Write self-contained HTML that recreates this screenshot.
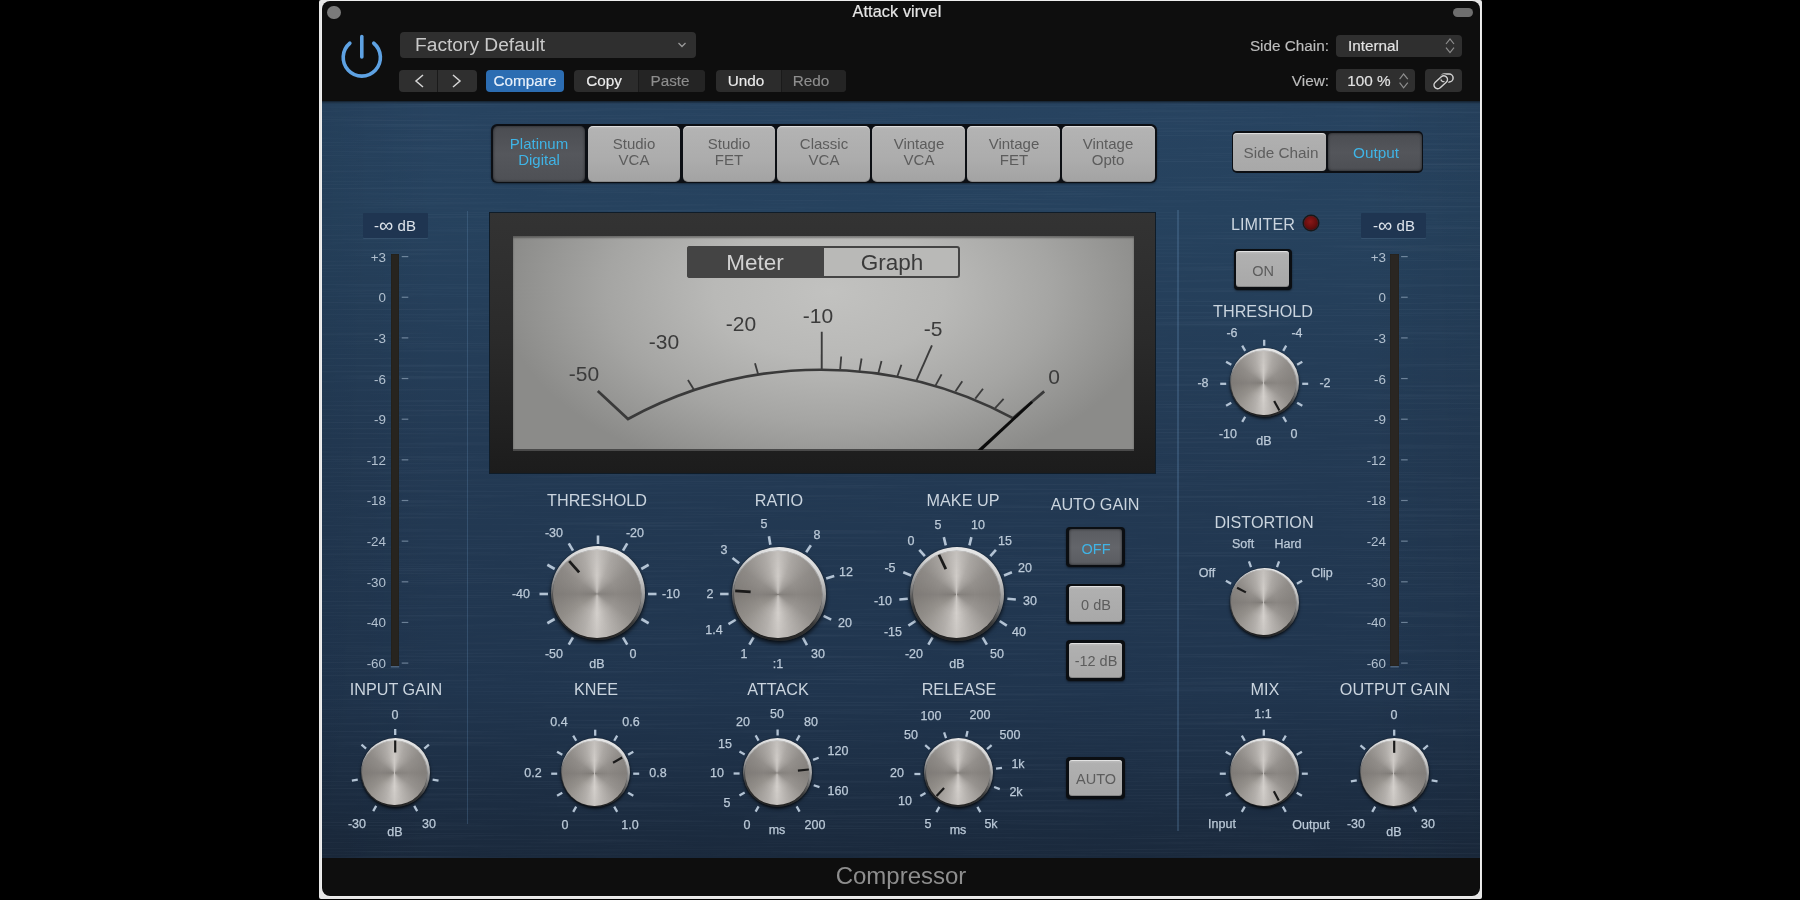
<!DOCTYPE html><html><head><meta charset="utf-8"><style>
html,body{margin:0;padding:0;background:#000;width:1800px;height:900px;overflow:hidden;}
body{position:relative;font-family:"Liberation Sans", sans-serif;}
.t{position:absolute;white-space:nowrap;font-family:"Liberation Sans", sans-serif;will-change:transform;}
.knob{position:absolute;border-radius:50%;}
</style></head><body>

<div style="position:absolute;left:319.2px;top:0px;width:1163.3px;height:898.7px;background:#e6e6e6;border-radius:2px;"></div>
<div style="position:absolute;left:321.5px;top:1.1px;width:1158.6px;height:895.3px;background:#0e0e0e;border-radius:8px;box-shadow:0 0 0 0.8px #f0f0f0;"></div>
<div style="position:absolute;left:321.5px;top:101px;width:1158.5px;height:757px;background:linear-gradient(180deg,rgb(39,67,96) 0%,rgb(38,66,94) 15%,rgb(35,58,84) 45%,rgb(32,53,78) 78%,rgb(28,45,66) 93%,rgb(26,41,60) 100%);"></div>
<div style="position:absolute;left:321.5px;top:101px;width:1158.5px;height:757px;background:linear-gradient(90deg,rgba(0,0,0,0.06) 0%,rgba(0,0,0,0) 10%,rgba(0,0,0,0) 90%,rgba(0,0,0,0.06) 100%);"></div>
<svg style="position:absolute;left:321.5px;top:101px" width="1158.5" height="757"><filter id="brush" x="0" y="0" width="100%" height="100%"><feTurbulence type="fractalNoise" baseFrequency="0.005 0.7" numOctaves="2" seed="3"/><feColorMatrix type="matrix" values="0 0 0 0 0.55  0 0 0 0 0.65  0 0 0 0 0.8  0 0 0 2 -1.0"/></filter><filter id="brush2" x="0" y="0" width="100%" height="100%"><feTurbulence type="fractalNoise" baseFrequency="0.005 0.7" numOctaves="2" seed="11"/><feColorMatrix type="matrix" values="0 0 0 0 0.05  0 0 0 0 0.08  0 0 0 0 0.12  0 0 0 2 -1.0"/></filter><rect width="1158.5" height="757" filter="url(#brush)" opacity="0.07"/><rect width="1158.5" height="757" filter="url(#brush2)" opacity="0.12"/></svg>
<div style="position:absolute;left:321.5px;top:101px;width:1158.5px;height:3px;background:linear-gradient(180deg,rgba(0,0,0,0.5),rgba(0,0,0,0));"></div>
<div style="position:absolute;left:327px;top:5.5px;width:13.6px;height:13.6px;border-radius:50%;background:#7a7a7a;"></div>
<div style="position:absolute;left:1453.3px;top:8px;width:19.7px;height:9px;border-radius:4.5px;background:#6e6e6e;"></div>
<div class="t" style="left:696.60px;top:1.27px;width:400px;text-align:center;line-height:21.06px;font-size:16.2px;color:#e6e6e6;font-weight:400;letter-spacing:0.12px;-webkit-text-stroke:0.2px #e6e6e6;">Attack virvel</div>
<div style="position:absolute;left:399.50px;top:31.50px;width:296.30px;height:26.00px;background:#2f2f2f;border-radius:4px;"></div>
<div class="t" style="left:415.00px;top:32.82px;width:400px;text-align:left;line-height:24.96px;font-size:19.2px;color:#c9c9c9;font-weight:400;letter-spacing:0px;">Factory Default</div>
<div style="position:absolute;left:399.00px;top:70.00px;width:77.50px;height:22.00px;background:#2f2f2f;border-radius:4px;"></div>
<div style="position:absolute;left:437.00px;top:70.00px;width:1.00px;height:22.00px;background:#1a1a1a;"></div>
<div style="position:absolute;left:486.00px;top:70.00px;width:78.00px;height:22.00px;background:#2c6db2;border-radius:4px;"></div>
<div class="t" style="left:325.00px;top:71.06px;width:400px;text-align:center;line-height:19.89px;font-size:15.3px;color:#e9f1fb;font-weight:400;letter-spacing:0px;-webkit-text-stroke:0.15px #e9f1fb;">Compare</div>
<div style="position:absolute;left:574.00px;top:70.00px;width:131.00px;height:22.00px;background:#2c2c2c;border-radius:4px;"></div>
<div style="position:absolute;left:638.00px;top:70.00px;width:67.00px;height:22.00px;background:#242424;border-radius:0 4px 4px 0;"></div>
<div style="position:absolute;left:638.00px;top:70.00px;width:1.00px;height:22.00px;background:#1a1a1a;"></div>
<div class="t" style="left:404.00px;top:71.06px;width:400px;text-align:center;line-height:19.89px;font-size:15.3px;color:#ececec;font-weight:400;letter-spacing:0px;-webkit-text-stroke:0.15px #ececec;">Copy</div>
<div class="t" style="left:470.00px;top:71.06px;width:400px;text-align:center;line-height:19.89px;font-size:15.3px;color:#8e8e8e;font-weight:400;letter-spacing:0px;-webkit-text-stroke:0.15px #8e8e8e;">Paste</div>
<div style="position:absolute;left:715.50px;top:70.00px;width:130.30px;height:22.00px;background:#2c2c2c;border-radius:4px;"></div>
<div style="position:absolute;left:781.00px;top:70.00px;width:64.80px;height:22.00px;background:#242424;border-radius:0 4px 4px 0;"></div>
<div style="position:absolute;left:781.00px;top:70.00px;width:1.00px;height:22.00px;background:#1a1a1a;"></div>
<div class="t" style="left:546.00px;top:71.06px;width:400px;text-align:center;line-height:19.89px;font-size:15.3px;color:#ececec;font-weight:400;letter-spacing:0px;-webkit-text-stroke:0.15px #ececec;">Undo</div>
<div class="t" style="left:611.00px;top:71.06px;width:400px;text-align:center;line-height:19.89px;font-size:15.3px;color:#8e8e8e;font-weight:400;letter-spacing:0px;-webkit-text-stroke:0.15px #8e8e8e;">Redo</div>
<div class="t" style="left:929.00px;top:35.85px;width:400px;text-align:right;line-height:19.89px;font-size:15.3px;color:#bdbdbd;font-weight:400;letter-spacing:0px;-webkit-text-stroke:0.15px #bdbdbd;">Side Chain:</div>
<div style="position:absolute;left:1335.70px;top:34.60px;width:126.00px;height:22.20px;background:#2f2f2f;border-radius:4px;"></div>
<div class="t" style="left:1348.00px;top:35.85px;width:400px;text-align:left;line-height:19.89px;font-size:15.3px;color:#e3e3e3;font-weight:400;letter-spacing:0px;-webkit-text-stroke:0.15px #e3e3e3;">Internal</div>
<div class="t" style="left:929.00px;top:70.66px;width:400px;text-align:right;line-height:19.89px;font-size:15.3px;color:#bdbdbd;font-weight:400;letter-spacing:0px;-webkit-text-stroke:0.15px #bdbdbd;">View:</div>
<div style="position:absolute;left:1335.70px;top:69.40px;width:79.10px;height:22.40px;background:#2f2f2f;border-radius:4px;"></div>
<div class="t" style="left:1169.00px;top:70.66px;width:400px;text-align:center;line-height:19.89px;font-size:15.3px;color:#e3e3e3;font-weight:400;letter-spacing:0px;-webkit-text-stroke:0.15px #e3e3e3;">100 %</div>
<div style="position:absolute;left:1425.00px;top:69.40px;width:36.70px;height:22.40px;background:#2f2f2f;border-radius:4px;"></div>
<svg style="position:absolute;left:0;top:0" width="1800" height="900"><path d="M 349.84 43.25 A 18.6 18.6 0 1 0 373.76 43.25" fill="none" stroke="#5ea2e3" stroke-width="3.6" stroke-linecap="round"/><line x1="361.8" y1="36.5" x2="361.8" y2="57" stroke="#5ea2e3" stroke-width="3.6" stroke-linecap="round"/><path d="M 678.5 43 L 682 46.5 L 685.5 43" fill="none" stroke="#9a9a9a" stroke-width="1.3"/><path d="M 423 75 L 416 81 L 423 87" fill="none" stroke="#d6d6d6" stroke-width="1.5"/><path d="M 453 75 L 460 81 L 453 87" fill="none" stroke="#d6d6d6" stroke-width="1.5"/><path d="M 1446 44 L 1450 39 L 1454 44 M 1446 47.6 L 1450 52.6 L 1454 47.6" fill="none" stroke="#8e8e8e" stroke-width="1.2"/><path d="M 1399.6 79.1 L 1403.6 74 L 1407.8 79.1 M 1399.6 82.7 L 1403.6 87.8 L 1407.8 82.7" fill="none" stroke="#8e8e8e" stroke-width="1.2"/><g fill="none" stroke="#d2d2d2" stroke-width="1.5"><rect x="1440.5" y="74" width="12.6" height="8" rx="4"/><rect x="1433" y="78.6" width="15.5" height="7.4" rx="3.7" transform="rotate(-42 1440.7 82.3)" stroke="#2c2c2c" stroke-width="3.2"/><rect x="1433" y="78.6" width="15.5" height="7.4" rx="3.7" transform="rotate(-42 1440.7 82.3)"/></g></svg>
<div class="t" style="left:700.60px;top:860.10px;width:400px;text-align:center;line-height:31.2px;font-size:24px;color:#8e8e8e;font-weight:400;letter-spacing:0px;">Compressor</div>
<div style="position:absolute;left:490.70px;top:123.70px;width:666.70px;height:59.60px;background:#0c0f14;border-radius:6px;box-shadow:0 1px 2px rgba(0,0,0,0.4);"></div>
<div style="position:absolute;left:492.60px;top:125.70px;width:92.30px;height:56.30px;background:linear-gradient(180deg,#4b4d52,#55575c 50%,#4e5055);border-radius:5px;box-shadow:inset 0 0 3px rgba(0,0,0,0.6);"></div>
<div class="t" style="left:338.75px;top:134.45px;width:400px;text-align:center;line-height:19.5px;font-size:15px;color:#3fb4e6;font-weight:400;letter-spacing:0px;">Platinum</div>
<div class="t" style="left:338.75px;top:150.05px;width:400px;text-align:center;line-height:19.5px;font-size:15px;color:#3fb4e6;font-weight:400;letter-spacing:0px;">Digital</div>
<div style="position:absolute;left:587.55px;top:125.70px;width:92.30px;height:56.00px;background:linear-gradient(180deg,#bdbdbd 0%,#b3b3b3 6%,#acacac 60%,#a3a3a3 100%);border-radius:5px;box-shadow:inset 0 1px 0 rgba(255,255,255,0.5),inset 0 -1px 0 rgba(0,0,0,0.15);"></div>
<div class="t" style="left:433.70px;top:134.45px;width:400px;text-align:center;line-height:19.5px;font-size:15px;color:#5c5c5c;font-weight:400;letter-spacing:0px;">Studio</div>
<div class="t" style="left:433.70px;top:150.05px;width:400px;text-align:center;line-height:19.5px;font-size:15px;color:#5c5c5c;font-weight:400;letter-spacing:0px;">VCA</div>
<div style="position:absolute;left:682.50px;top:125.70px;width:92.30px;height:56.00px;background:linear-gradient(180deg,#bdbdbd 0%,#b3b3b3 6%,#acacac 60%,#a3a3a3 100%);border-radius:5px;box-shadow:inset 0 1px 0 rgba(255,255,255,0.5),inset 0 -1px 0 rgba(0,0,0,0.15);"></div>
<div class="t" style="left:528.65px;top:134.45px;width:400px;text-align:center;line-height:19.5px;font-size:15px;color:#5c5c5c;font-weight:400;letter-spacing:0px;">Studio</div>
<div class="t" style="left:528.65px;top:150.05px;width:400px;text-align:center;line-height:19.5px;font-size:15px;color:#5c5c5c;font-weight:400;letter-spacing:0px;">FET</div>
<div style="position:absolute;left:777.45px;top:125.70px;width:92.30px;height:56.00px;background:linear-gradient(180deg,#bdbdbd 0%,#b3b3b3 6%,#acacac 60%,#a3a3a3 100%);border-radius:5px;box-shadow:inset 0 1px 0 rgba(255,255,255,0.5),inset 0 -1px 0 rgba(0,0,0,0.15);"></div>
<div class="t" style="left:623.60px;top:134.45px;width:400px;text-align:center;line-height:19.5px;font-size:15px;color:#5c5c5c;font-weight:400;letter-spacing:0px;">Classic</div>
<div class="t" style="left:623.60px;top:150.05px;width:400px;text-align:center;line-height:19.5px;font-size:15px;color:#5c5c5c;font-weight:400;letter-spacing:0px;">VCA</div>
<div style="position:absolute;left:872.40px;top:125.70px;width:92.30px;height:56.00px;background:linear-gradient(180deg,#bdbdbd 0%,#b3b3b3 6%,#acacac 60%,#a3a3a3 100%);border-radius:5px;box-shadow:inset 0 1px 0 rgba(255,255,255,0.5),inset 0 -1px 0 rgba(0,0,0,0.15);"></div>
<div class="t" style="left:718.55px;top:134.45px;width:400px;text-align:center;line-height:19.5px;font-size:15px;color:#5c5c5c;font-weight:400;letter-spacing:0px;">Vintage</div>
<div class="t" style="left:718.55px;top:150.05px;width:400px;text-align:center;line-height:19.5px;font-size:15px;color:#5c5c5c;font-weight:400;letter-spacing:0px;">VCA</div>
<div style="position:absolute;left:967.35px;top:125.70px;width:92.30px;height:56.00px;background:linear-gradient(180deg,#bdbdbd 0%,#b3b3b3 6%,#acacac 60%,#a3a3a3 100%);border-radius:5px;box-shadow:inset 0 1px 0 rgba(255,255,255,0.5),inset 0 -1px 0 rgba(0,0,0,0.15);"></div>
<div class="t" style="left:813.50px;top:134.45px;width:400px;text-align:center;line-height:19.5px;font-size:15px;color:#5c5c5c;font-weight:400;letter-spacing:0px;">Vintage</div>
<div class="t" style="left:813.50px;top:150.05px;width:400px;text-align:center;line-height:19.5px;font-size:15px;color:#5c5c5c;font-weight:400;letter-spacing:0px;">FET</div>
<div style="position:absolute;left:1062.30px;top:125.70px;width:92.30px;height:56.00px;background:linear-gradient(180deg,#bdbdbd 0%,#b3b3b3 6%,#acacac 60%,#a3a3a3 100%);border-radius:5px;box-shadow:inset 0 1px 0 rgba(255,255,255,0.5),inset 0 -1px 0 rgba(0,0,0,0.15);"></div>
<div class="t" style="left:908.45px;top:134.45px;width:400px;text-align:center;line-height:19.5px;font-size:15px;color:#5c5c5c;font-weight:400;letter-spacing:0px;">Vintage</div>
<div class="t" style="left:908.45px;top:150.05px;width:400px;text-align:center;line-height:19.5px;font-size:15px;color:#5c5c5c;font-weight:400;letter-spacing:0px;">Opto</div>
<div style="position:absolute;left:1231.90px;top:131.30px;width:191.30px;height:41.30px;background:#0c0f14;border-radius:5px;"></div>
<div style="position:absolute;left:1233.40px;top:132.90px;width:92.90px;height:37.80px;background:linear-gradient(180deg,#bdbdbd 0%,#b0b0b0 8%,#a8a8a8 100%);border-radius:4px;box-shadow:inset 0 1px 0 rgba(255,255,255,0.5);"></div>
<div style="position:absolute;left:1327.90px;top:132.90px;width:93.80px;height:37.80px;background:linear-gradient(180deg,#4b4d52,#54565b 50%,#4d4f54);border-radius:4px;box-shadow:inset 0 0 3px rgba(0,0,0,0.6);"></div>
<div class="t" style="left:1080.90px;top:143.16px;width:400px;text-align:center;line-height:19.89px;font-size:15.3px;color:#5e5e5e;font-weight:400;letter-spacing:0px;">Side Chain</div>
<div class="t" style="left:1175.80px;top:143.16px;width:400px;text-align:center;line-height:19.89px;font-size:15.3px;color:#3fb4e6;font-weight:400;letter-spacing:0px;">Output</div>
<div style="position:absolute;left:489.30px;top:212.30px;width:666.70px;height:261.40px;background:linear-gradient(180deg,#333333 0%,#2a2a2a 50%,#1c1c1c 100%);border:1px solid #0f1c28;box-sizing:border-box;"></div>
<div style="position:absolute;left:512.70px;top:235.80px;width:621.00px;height:214.70px;background:radial-gradient(ellipse 53% 90% at 51% 26%,#c2c2c0 0%,#b9b9b7 35%,#a5a5a3 68%,#8b8b89 100%);box-shadow:inset 0 2px 2px rgba(0,0,0,0.35);"></div>
<div style="position:absolute;left:512.70px;top:448.50px;width:621.00px;height:2.00px;background:#4a4a4a;"></div>
<div style="position:absolute;left:687.00px;top:246.40px;width:273.30px;height:31.40px;background:#b9b9b7;border:2px solid #444;border-radius:3px;box-sizing:border-box;"></div>
<div style="position:absolute;left:687.00px;top:246.40px;width:137.20px;height:31.40px;background:#444444;border-radius:3px 0 0 3px;"></div>
<div class="t" style="left:554.80px;top:247.68px;width:400px;text-align:center;line-height:29.25px;font-size:22.5px;color:#d2d2d2;font-weight:400;letter-spacing:0px;">Meter</div>
<div class="t" style="left:692.00px;top:247.68px;width:400px;text-align:center;line-height:29.25px;font-size:22.5px;color:#3a3a3a;font-weight:400;letter-spacing:0px;">Graph</div>
<svg style="position:absolute;left:0;top:0" width="1800" height="900"><path d="M 597.8 391.1 L 628.01 419.00 A 403.65 403.65 0 0 1 1012.91 418.16 L 1044.2 391.4" fill="none" stroke="#3a3a3a" stroke-width="2.7" stroke-linejoin="miter"/><line x1="694.29" y1="390.23" x2="687.95" y2="380.04" stroke="#3c3c3c" stroke-width="1.8"/><line x1="758.29" y1="374.69" x2="754.98" y2="363.15" stroke="#3c3c3c" stroke-width="1.8"/><line x1="821.72" y1="369.75" x2="821.76" y2="331.75" stroke="#3c3c3c" stroke-width="1.9"/><line x1="916.15" y1="381.07" x2="931.92" y2="345.40" stroke="#3c3c3c" stroke-width="1.9"/><line x1="840.20" y1="369.00" x2="841.23" y2="356.54" stroke="#3c3c3c" stroke-width="1.8"/><line x1="859.50" y1="370.80" x2="861.59" y2="358.48" stroke="#3c3c3c" stroke-width="1.8"/><line x1="878.40" y1="373.10" x2="881.50" y2="360.99" stroke="#3c3c3c" stroke-width="1.8"/><line x1="897.30" y1="376.50" x2="901.40" y2="364.69" stroke="#3c3c3c" stroke-width="1.8"/><line x1="935.60" y1="385.40" x2="941.58" y2="374.42" stroke="#3c3c3c" stroke-width="1.8"/><line x1="955.40" y1="391.60" x2="962.27" y2="381.16" stroke="#3c3c3c" stroke-width="1.8"/><line x1="975.30" y1="398.60" x2="983.01" y2="388.76" stroke="#3c3c3c" stroke-width="1.8"/><line x1="995.10" y1="408.10" x2="1003.61" y2="398.94" stroke="#3c3c3c" stroke-width="1.8"/><path d="M 977.5 450 L 982.5 450 L 1033 402.8 L 1031.2 401 Z" fill="#0c0c0c"/></svg>
<div class="t" style="left:384.10px;top:360.35px;width:400px;text-align:center;line-height:27.3px;font-size:21px;color:#3b3b3b;font-weight:400;letter-spacing:0px;">-50</div>
<div class="t" style="left:464.30px;top:327.55px;width:400px;text-align:center;line-height:27.3px;font-size:21px;color:#3b3b3b;font-weight:400;letter-spacing:0px;">-30</div>
<div class="t" style="left:541.30px;top:310.35px;width:400px;text-align:center;line-height:27.3px;font-size:21px;color:#3b3b3b;font-weight:400;letter-spacing:0px;">-20</div>
<div class="t" style="left:617.50px;top:302.35px;width:400px;text-align:center;line-height:27.3px;font-size:21px;color:#3b3b3b;font-weight:400;letter-spacing:0px;">-10</div>
<div class="t" style="left:732.50px;top:314.55px;width:400px;text-align:center;line-height:27.3px;font-size:21px;color:#3b3b3b;font-weight:400;letter-spacing:0px;">-5</div>
<div class="t" style="left:853.70px;top:362.95px;width:400px;text-align:center;line-height:27.3px;font-size:21px;color:#3b3b3b;font-weight:400;letter-spacing:0px;">0</div>
<div style="position:absolute;left:466.50px;top:210.60px;width:1.50px;height:613.80px;background:rgba(95,135,175,0.30);"></div>
<div style="position:absolute;left:1177.00px;top:210.00px;width:1.50px;height:621.00px;background:rgba(95,135,175,0.30);"></div>
<div style="position:absolute;left:362.80px;top:212.50px;width:65.00px;height:25.50px;background:#1f3551;border-radius:1px;box-shadow:0 1px 0 rgba(120,150,180,0.18);"></div>
<div class="t" style="left:195.30px;top:215.85px;width:400px;text-align:center;line-height:19.5px;font-size:15px;color:#dde3ea;font-weight:400;letter-spacing:0px;">-<span style="font-size:20px;line-height:10px;vertical-align:-1px">&#8734;</span> dB</div>
<div style="position:absolute;left:390.80px;top:254.00px;width:8.40px;height:411.60px;background:#27241f;box-shadow:inset 0 0 1px rgba(0,0,0,0.8);"></div>
<div class="t" style="left:-13.80px;top:248.59px;width:400px;text-align:right;line-height:17.42px;font-size:13.4px;color:#b2c0cf;font-weight:400;letter-spacing:0px;">+3</div>
<div class="t" style="left:-13.80px;top:289.24px;width:400px;text-align:right;line-height:17.42px;font-size:13.4px;color:#b2c0cf;font-weight:400;letter-spacing:0px;">0</div>
<div class="t" style="left:-13.80px;top:329.89px;width:400px;text-align:right;line-height:17.42px;font-size:13.4px;color:#b2c0cf;font-weight:400;letter-spacing:0px;">-3</div>
<div class="t" style="left:-13.80px;top:370.54px;width:400px;text-align:right;line-height:17.42px;font-size:13.4px;color:#b2c0cf;font-weight:400;letter-spacing:0px;">-6</div>
<div class="t" style="left:-13.80px;top:411.19px;width:400px;text-align:right;line-height:17.42px;font-size:13.4px;color:#b2c0cf;font-weight:400;letter-spacing:0px;">-9</div>
<div class="t" style="left:-13.80px;top:451.84px;width:400px;text-align:right;line-height:17.42px;font-size:13.4px;color:#b2c0cf;font-weight:400;letter-spacing:0px;">-12</div>
<div class="t" style="left:-13.80px;top:492.49px;width:400px;text-align:right;line-height:17.42px;font-size:13.4px;color:#b2c0cf;font-weight:400;letter-spacing:0px;">-18</div>
<div class="t" style="left:-13.80px;top:533.14px;width:400px;text-align:right;line-height:17.42px;font-size:13.4px;color:#b2c0cf;font-weight:400;letter-spacing:0px;">-24</div>
<div class="t" style="left:-13.80px;top:573.79px;width:400px;text-align:right;line-height:17.42px;font-size:13.4px;color:#b2c0cf;font-weight:400;letter-spacing:0px;">-30</div>
<div class="t" style="left:-13.80px;top:614.44px;width:400px;text-align:right;line-height:17.42px;font-size:13.4px;color:#b2c0cf;font-weight:400;letter-spacing:0px;">-40</div>
<div class="t" style="left:-13.80px;top:655.09px;width:400px;text-align:right;line-height:17.42px;font-size:13.4px;color:#b2c0cf;font-weight:400;letter-spacing:0px;">-60</div>
<div style="position:absolute;left:1361.30px;top:212.50px;width:65.20px;height:25.50px;background:#1f3551;border-radius:1px;box-shadow:0 1px 0 rgba(120,150,180,0.18);"></div>
<div class="t" style="left:1193.90px;top:215.85px;width:400px;text-align:center;line-height:19.5px;font-size:15px;color:#dde3ea;font-weight:400;letter-spacing:0px;">-<span style="font-size:20px;line-height:10px;vertical-align:-1px">&#8734;</span> dB</div>
<div style="position:absolute;left:1390.40px;top:254.00px;width:8.40px;height:411.60px;background:#2a2622;box-shadow:inset 0 0 1px rgba(0,0,0,0.8);"></div>
<div class="t" style="left:985.60px;top:248.59px;width:400px;text-align:right;line-height:17.42px;font-size:13.4px;color:#b2c0cf;font-weight:400;letter-spacing:0px;">+3</div>
<div class="t" style="left:985.60px;top:289.24px;width:400px;text-align:right;line-height:17.42px;font-size:13.4px;color:#b2c0cf;font-weight:400;letter-spacing:0px;">0</div>
<div class="t" style="left:985.60px;top:329.89px;width:400px;text-align:right;line-height:17.42px;font-size:13.4px;color:#b2c0cf;font-weight:400;letter-spacing:0px;">-3</div>
<div class="t" style="left:985.60px;top:370.54px;width:400px;text-align:right;line-height:17.42px;font-size:13.4px;color:#b2c0cf;font-weight:400;letter-spacing:0px;">-6</div>
<div class="t" style="left:985.60px;top:411.19px;width:400px;text-align:right;line-height:17.42px;font-size:13.4px;color:#b2c0cf;font-weight:400;letter-spacing:0px;">-9</div>
<div class="t" style="left:985.60px;top:451.84px;width:400px;text-align:right;line-height:17.42px;font-size:13.4px;color:#b2c0cf;font-weight:400;letter-spacing:0px;">-12</div>
<div class="t" style="left:985.60px;top:492.49px;width:400px;text-align:right;line-height:17.42px;font-size:13.4px;color:#b2c0cf;font-weight:400;letter-spacing:0px;">-18</div>
<div class="t" style="left:985.60px;top:533.14px;width:400px;text-align:right;line-height:17.42px;font-size:13.4px;color:#b2c0cf;font-weight:400;letter-spacing:0px;">-24</div>
<div class="t" style="left:985.60px;top:573.79px;width:400px;text-align:right;line-height:17.42px;font-size:13.4px;color:#b2c0cf;font-weight:400;letter-spacing:0px;">-30</div>
<div class="t" style="left:985.60px;top:614.44px;width:400px;text-align:right;line-height:17.42px;font-size:13.4px;color:#b2c0cf;font-weight:400;letter-spacing:0px;">-40</div>
<div class="t" style="left:985.60px;top:655.09px;width:400px;text-align:right;line-height:17.42px;font-size:13.4px;color:#b2c0cf;font-weight:400;letter-spacing:0px;">-60</div>
<svg style="position:absolute;left:0;top:0" width="1800" height="900"><line x1="401.70" y1="256.60" x2="408.30" y2="256.60" stroke="rgba(170,190,210,0.55)" stroke-width="1.2" stroke-linecap="butt"/><line x1="401.70" y1="297.25" x2="408.30" y2="297.25" stroke="rgba(170,190,210,0.55)" stroke-width="1.2" stroke-linecap="butt"/><line x1="401.70" y1="337.90" x2="408.30" y2="337.90" stroke="rgba(170,190,210,0.55)" stroke-width="1.2" stroke-linecap="butt"/><line x1="401.70" y1="378.55" x2="408.30" y2="378.55" stroke="rgba(170,190,210,0.55)" stroke-width="1.2" stroke-linecap="butt"/><line x1="401.70" y1="419.20" x2="408.30" y2="419.20" stroke="rgba(170,190,210,0.55)" stroke-width="1.2" stroke-linecap="butt"/><line x1="401.70" y1="459.85" x2="408.30" y2="459.85" stroke="rgba(170,190,210,0.55)" stroke-width="1.2" stroke-linecap="butt"/><line x1="401.70" y1="500.50" x2="408.30" y2="500.50" stroke="rgba(170,190,210,0.55)" stroke-width="1.2" stroke-linecap="butt"/><line x1="401.70" y1="541.15" x2="408.30" y2="541.15" stroke="rgba(170,190,210,0.55)" stroke-width="1.2" stroke-linecap="butt"/><line x1="401.70" y1="581.80" x2="408.30" y2="581.80" stroke="rgba(170,190,210,0.55)" stroke-width="1.2" stroke-linecap="butt"/><line x1="401.70" y1="622.45" x2="408.30" y2="622.45" stroke="rgba(170,190,210,0.55)" stroke-width="1.2" stroke-linecap="butt"/><line x1="401.70" y1="663.10" x2="408.30" y2="663.10" stroke="rgba(170,190,210,0.55)" stroke-width="1.2" stroke-linecap="butt"/><line x1="390.80" y1="666.80" x2="399.20" y2="666.80" stroke="rgba(150,175,200,0.45)" stroke-width="1.3" stroke-linecap="butt"/><line x1="1401.10" y1="256.60" x2="1407.70" y2="256.60" stroke="rgba(170,190,210,0.55)" stroke-width="1.2" stroke-linecap="butt"/><line x1="1401.10" y1="297.25" x2="1407.70" y2="297.25" stroke="rgba(170,190,210,0.55)" stroke-width="1.2" stroke-linecap="butt"/><line x1="1401.10" y1="337.90" x2="1407.70" y2="337.90" stroke="rgba(170,190,210,0.55)" stroke-width="1.2" stroke-linecap="butt"/><line x1="1401.10" y1="378.55" x2="1407.70" y2="378.55" stroke="rgba(170,190,210,0.55)" stroke-width="1.2" stroke-linecap="butt"/><line x1="1401.10" y1="419.20" x2="1407.70" y2="419.20" stroke="rgba(170,190,210,0.55)" stroke-width="1.2" stroke-linecap="butt"/><line x1="1401.10" y1="459.85" x2="1407.70" y2="459.85" stroke="rgba(170,190,210,0.55)" stroke-width="1.2" stroke-linecap="butt"/><line x1="1401.10" y1="500.50" x2="1407.70" y2="500.50" stroke="rgba(170,190,210,0.55)" stroke-width="1.2" stroke-linecap="butt"/><line x1="1401.10" y1="541.15" x2="1407.70" y2="541.15" stroke="rgba(170,190,210,0.55)" stroke-width="1.2" stroke-linecap="butt"/><line x1="1401.10" y1="581.80" x2="1407.70" y2="581.80" stroke="rgba(170,190,210,0.55)" stroke-width="1.2" stroke-linecap="butt"/><line x1="1401.10" y1="622.45" x2="1407.70" y2="622.45" stroke="rgba(170,190,210,0.55)" stroke-width="1.2" stroke-linecap="butt"/><line x1="1401.10" y1="663.10" x2="1407.70" y2="663.10" stroke="rgba(170,190,210,0.55)" stroke-width="1.2" stroke-linecap="butt"/><line x1="1390.40" y1="666.80" x2="1398.80" y2="666.80" stroke="rgba(150,175,200,0.45)" stroke-width="1.3" stroke-linecap="butt"/></svg>
<div class="t" style="left:396.60px;top:490.07px;width:400px;text-align:center;line-height:21.06px;font-size:16.2px;color:#cad4de;font-weight:400;letter-spacing:0px;">THRESHOLD</div>
<div class="t" style="left:579.10px;top:490.07px;width:400px;text-align:center;line-height:21.06px;font-size:16.2px;color:#cad4de;font-weight:400;letter-spacing:0px;">RATIO</div>
<div class="t" style="left:762.90px;top:490.07px;width:400px;text-align:center;line-height:21.06px;font-size:16.2px;color:#cad4de;font-weight:400;letter-spacing:0px;">MAKE UP</div>
<div class="t" style="left:895.20px;top:493.57px;width:400px;text-align:center;line-height:21.06px;font-size:16.2px;color:#cad4de;font-weight:400;letter-spacing:0px;">AUTO GAIN</div>
<div class="t" style="left:396.30px;top:678.87px;width:400px;text-align:center;line-height:21.06px;font-size:16.2px;color:#cad4de;font-weight:400;letter-spacing:0px;">KNEE</div>
<div class="t" style="left:578.00px;top:678.87px;width:400px;text-align:center;line-height:21.06px;font-size:16.2px;color:#cad4de;font-weight:400;letter-spacing:0px;">ATTACK</div>
<div class="t" style="left:759.00px;top:678.77px;width:400px;text-align:center;line-height:21.06px;font-size:16.2px;color:#cad4de;font-weight:400;letter-spacing:0px;">RELEASE</div>
<div class="t" style="left:195.60px;top:679.07px;width:400px;text-align:center;line-height:21.06px;font-size:16.2px;color:#cad4de;font-weight:400;letter-spacing:0px;">INPUT GAIN</div>
<div class="t" style="left:1064.60px;top:678.57px;width:400px;text-align:center;line-height:21.06px;font-size:16.2px;color:#cad4de;font-weight:400;letter-spacing:0px;">MIX</div>
<div class="t" style="left:1194.60px;top:678.57px;width:400px;text-align:center;line-height:21.06px;font-size:16.2px;color:#cad4de;font-weight:400;letter-spacing:0px;">OUTPUT GAIN</div>
<div class="t" style="left:1063.80px;top:512.27px;width:400px;text-align:center;line-height:21.06px;font-size:16.2px;color:#cad4de;font-weight:400;letter-spacing:0px;">DISTORTION</div>
<div class="t" style="left:1062.50px;top:301.07px;width:400px;text-align:center;line-height:21.06px;font-size:16.2px;color:#cad4de;font-weight:400;letter-spacing:0px;">THRESHOLD</div>
<div class="t" style="left:1063.10px;top:213.57px;width:400px;text-align:center;line-height:21.06px;font-size:16.2px;color:#cad4de;font-weight:400;letter-spacing:0px;">LIMITER</div>
<div style="position:absolute;left:1303.5px;top:216px;width:14.4px;height:14.4px;border-radius:50%;background:radial-gradient(circle at 45% 40%,#8a1818 0%,#640e0e 55%,#320707 100%);box-shadow:0 0 0 1.5px #181818;"></div>
<div style="position:absolute;left:1066.40px;top:526.60px;width:58.50px;height:40.70px;background:#0b0e12;border-radius:4px;box-shadow:0 1px 2px rgba(0,0,0,0.5);"></div>
<div style="position:absolute;left:1069.00px;top:529.30px;width:53.30px;height:35.30px;background:linear-gradient(180deg,#5a5c61,#63656a 50%,#5a5c61);border-radius:3px;box-shadow:inset 0 0 3px rgba(0,0,0,0.6);"></div>
<div class="t" style="left:895.65px;top:539.53px;width:400px;text-align:center;line-height:18.85px;font-size:14.5px;color:#3fb4e6;font-weight:400;letter-spacing:0px;">OFF</div>
<div style="position:absolute;left:1066.40px;top:583.60px;width:58.50px;height:40.70px;background:#0b0e12;border-radius:4px;box-shadow:0 1px 2px rgba(0,0,0,0.5);"></div>
<div style="position:absolute;left:1069.00px;top:586.30px;width:53.30px;height:35.30px;background:linear-gradient(180deg,#c0c0c0 0%,#b0b0b0 10%,#a8a8a8 100%);border-radius:3px;box-shadow:inset 0 1px 0 rgba(255,255,255,0.55),inset 0 -1px 0 rgba(0,0,0,0.2);"></div>
<div class="t" style="left:895.65px;top:595.83px;width:400px;text-align:center;line-height:18.85px;font-size:14.5px;color:#5c5c5c;font-weight:400;letter-spacing:0px;">0 dB</div>
<div style="position:absolute;left:1066.40px;top:640.10px;width:58.50px;height:40.70px;background:#0b0e12;border-radius:4px;box-shadow:0 1px 2px rgba(0,0,0,0.5);"></div>
<div style="position:absolute;left:1069.00px;top:642.80px;width:53.30px;height:35.30px;background:linear-gradient(180deg,#c0c0c0 0%,#b0b0b0 10%,#a8a8a8 100%);border-radius:3px;box-shadow:inset 0 1px 0 rgba(255,255,255,0.55),inset 0 -1px 0 rgba(0,0,0,0.2);"></div>
<div class="t" style="left:895.65px;top:652.33px;width:400px;text-align:center;line-height:18.85px;font-size:14.5px;color:#5c5c5c;font-weight:400;letter-spacing:0px;">-12 dB</div>
<div style="position:absolute;left:1066.40px;top:757.40px;width:58.50px;height:41.60px;background:#0b0e12;border-radius:4px;box-shadow:0 1px 2px rgba(0,0,0,0.5);"></div>
<div style="position:absolute;left:1069.00px;top:760.10px;width:53.30px;height:36.20px;background:linear-gradient(180deg,#c0c0c0 0%,#b0b0b0 10%,#a8a8a8 100%);border-radius:3px;box-shadow:inset 0 1px 0 rgba(255,255,255,0.55),inset 0 -1px 0 rgba(0,0,0,0.2);"></div>
<div class="t" style="left:895.65px;top:770.08px;width:400px;text-align:center;line-height:18.85px;font-size:14.5px;color:#5c5c5c;font-weight:400;letter-spacing:0px;">AUTO</div>
<div style="position:absolute;left:1233.60px;top:248.50px;width:58.30px;height:41.60px;background:#0b0e12;border-radius:4px;box-shadow:0 1px 2px rgba(0,0,0,0.5);"></div>
<div style="position:absolute;left:1236.20px;top:251.20px;width:53.10px;height:36.20px;background:linear-gradient(180deg,#c0c0c0 0%,#b0b0b0 10%,#a8a8a8 100%);border-radius:3px;box-shadow:inset 0 1px 0 rgba(255,255,255,0.55),inset 0 -1px 0 rgba(0,0,0,0.2);"></div>
<div class="t" style="left:1062.75px;top:261.68px;width:400px;text-align:center;line-height:18.85px;font-size:14.5px;color:#5c5c5c;font-weight:400;letter-spacing:0px;">ON</div>
<div class="t" style="left:353.80px;top:645.88px;width:400px;text-align:center;line-height:16.25px;font-size:12.5px;color:#bccad8;font-weight:400;letter-spacing:0px;-webkit-text-stroke:0.25px #bccad8;">-50</div>
<div class="t" style="left:321.00px;top:586.27px;width:400px;text-align:center;line-height:16.25px;font-size:12.5px;color:#bccad8;font-weight:400;letter-spacing:0px;-webkit-text-stroke:0.25px #bccad8;">-40</div>
<div class="t" style="left:353.80px;top:524.88px;width:400px;text-align:center;line-height:16.25px;font-size:12.5px;color:#bccad8;font-weight:400;letter-spacing:0px;-webkit-text-stroke:0.25px #bccad8;">-30</div>
<div class="t" style="left:435.00px;top:524.88px;width:400px;text-align:center;line-height:16.25px;font-size:12.5px;color:#bccad8;font-weight:400;letter-spacing:0px;-webkit-text-stroke:0.25px #bccad8;">-20</div>
<div class="t" style="left:471.00px;top:586.27px;width:400px;text-align:center;line-height:16.25px;font-size:12.5px;color:#bccad8;font-weight:400;letter-spacing:0px;-webkit-text-stroke:0.25px #bccad8;">-10</div>
<div class="t" style="left:432.60px;top:645.88px;width:400px;text-align:center;line-height:16.25px;font-size:12.5px;color:#bccad8;font-weight:400;letter-spacing:0px;-webkit-text-stroke:0.25px #bccad8;">0</div>
<div class="t" style="left:397.00px;top:655.88px;width:400px;text-align:center;line-height:16.25px;font-size:12.5px;color:#bccad8;font-weight:400;letter-spacing:0px;-webkit-text-stroke:0.25px #bccad8;">dB</div>
<div class="t" style="left:563.90px;top:515.88px;width:400px;text-align:center;line-height:16.25px;font-size:12.5px;color:#bccad8;font-weight:400;letter-spacing:0px;-webkit-text-stroke:0.25px #bccad8;">5</div>
<div class="t" style="left:617.20px;top:527.48px;width:400px;text-align:center;line-height:16.25px;font-size:12.5px;color:#bccad8;font-weight:400;letter-spacing:0px;-webkit-text-stroke:0.25px #bccad8;">8</div>
<div class="t" style="left:523.80px;top:542.27px;width:400px;text-align:center;line-height:16.25px;font-size:12.5px;color:#bccad8;font-weight:400;letter-spacing:0px;-webkit-text-stroke:0.25px #bccad8;">3</div>
<div class="t" style="left:645.70px;top:563.98px;width:400px;text-align:center;line-height:16.25px;font-size:12.5px;color:#bccad8;font-weight:400;letter-spacing:0px;-webkit-text-stroke:0.25px #bccad8;">12</div>
<div class="t" style="left:510.00px;top:586.17px;width:400px;text-align:center;line-height:16.25px;font-size:12.5px;color:#bccad8;font-weight:400;letter-spacing:0px;-webkit-text-stroke:0.25px #bccad8;">2</div>
<div class="t" style="left:513.60px;top:621.67px;width:400px;text-align:center;line-height:16.25px;font-size:12.5px;color:#bccad8;font-weight:400;letter-spacing:0px;-webkit-text-stroke:0.25px #bccad8;">1.4</div>
<div class="t" style="left:644.70px;top:615.08px;width:400px;text-align:center;line-height:16.25px;font-size:12.5px;color:#bccad8;font-weight:400;letter-spacing:0px;-webkit-text-stroke:0.25px #bccad8;">20</div>
<div class="t" style="left:543.80px;top:645.67px;width:400px;text-align:center;line-height:16.25px;font-size:12.5px;color:#bccad8;font-weight:400;letter-spacing:0px;-webkit-text-stroke:0.25px #bccad8;">1</div>
<div class="t" style="left:617.70px;top:645.67px;width:400px;text-align:center;line-height:16.25px;font-size:12.5px;color:#bccad8;font-weight:400;letter-spacing:0px;-webkit-text-stroke:0.25px #bccad8;">30</div>
<div class="t" style="left:578.20px;top:656.27px;width:400px;text-align:center;line-height:16.25px;font-size:12.5px;color:#bccad8;font-weight:400;letter-spacing:0px;-webkit-text-stroke:0.25px #bccad8;">:1</div>
<div class="t" style="left:737.70px;top:516.98px;width:400px;text-align:center;line-height:16.25px;font-size:12.5px;color:#bccad8;font-weight:400;letter-spacing:0px;-webkit-text-stroke:0.25px #bccad8;">5</div>
<div class="t" style="left:778.20px;top:516.98px;width:400px;text-align:center;line-height:16.25px;font-size:12.5px;color:#bccad8;font-weight:400;letter-spacing:0px;-webkit-text-stroke:0.25px #bccad8;">10</div>
<div class="t" style="left:710.70px;top:532.77px;width:400px;text-align:center;line-height:16.25px;font-size:12.5px;color:#bccad8;font-weight:400;letter-spacing:0px;-webkit-text-stroke:0.25px #bccad8;">0</div>
<div class="t" style="left:805.20px;top:533.48px;width:400px;text-align:center;line-height:16.25px;font-size:12.5px;color:#bccad8;font-weight:400;letter-spacing:0px;-webkit-text-stroke:0.25px #bccad8;">15</div>
<div class="t" style="left:689.50px;top:560.27px;width:400px;text-align:center;line-height:16.25px;font-size:12.5px;color:#bccad8;font-weight:400;letter-spacing:0px;-webkit-text-stroke:0.25px #bccad8;">-5</div>
<div class="t" style="left:824.60px;top:559.88px;width:400px;text-align:center;line-height:16.25px;font-size:12.5px;color:#bccad8;font-weight:400;letter-spacing:0px;-webkit-text-stroke:0.25px #bccad8;">20</div>
<div class="t" style="left:682.80px;top:592.58px;width:400px;text-align:center;line-height:16.25px;font-size:12.5px;color:#bccad8;font-weight:400;letter-spacing:0px;-webkit-text-stroke:0.25px #bccad8;">-10</div>
<div class="t" style="left:829.50px;top:592.58px;width:400px;text-align:center;line-height:16.25px;font-size:12.5px;color:#bccad8;font-weight:400;letter-spacing:0px;-webkit-text-stroke:0.25px #bccad8;">30</div>
<div class="t" style="left:692.70px;top:623.58px;width:400px;text-align:center;line-height:16.25px;font-size:12.5px;color:#bccad8;font-weight:400;letter-spacing:0px;-webkit-text-stroke:0.25px #bccad8;">-15</div>
<div class="t" style="left:818.70px;top:623.58px;width:400px;text-align:center;line-height:16.25px;font-size:12.5px;color:#bccad8;font-weight:400;letter-spacing:0px;-webkit-text-stroke:0.25px #bccad8;">40</div>
<div class="t" style="left:713.80px;top:645.67px;width:400px;text-align:center;line-height:16.25px;font-size:12.5px;color:#bccad8;font-weight:400;letter-spacing:0px;-webkit-text-stroke:0.25px #bccad8;">-20</div>
<div class="t" style="left:796.80px;top:645.67px;width:400px;text-align:center;line-height:16.25px;font-size:12.5px;color:#bccad8;font-weight:400;letter-spacing:0px;-webkit-text-stroke:0.25px #bccad8;">50</div>
<div class="t" style="left:756.70px;top:655.88px;width:400px;text-align:center;line-height:16.25px;font-size:12.5px;color:#bccad8;font-weight:400;letter-spacing:0px;-webkit-text-stroke:0.25px #bccad8;">dB</div>
<div class="t" style="left:195.00px;top:706.58px;width:400px;text-align:center;line-height:16.25px;font-size:12.5px;color:#bccad8;font-weight:400;letter-spacing:0px;-webkit-text-stroke:0.25px #bccad8;">0</div>
<div class="t" style="left:157.40px;top:816.48px;width:400px;text-align:center;line-height:16.25px;font-size:12.5px;color:#bccad8;font-weight:400;letter-spacing:0px;-webkit-text-stroke:0.25px #bccad8;">-30</div>
<div class="t" style="left:229.20px;top:816.48px;width:400px;text-align:center;line-height:16.25px;font-size:12.5px;color:#bccad8;font-weight:400;letter-spacing:0px;-webkit-text-stroke:0.25px #bccad8;">30</div>
<div class="t" style="left:195.40px;top:823.88px;width:400px;text-align:center;line-height:16.25px;font-size:12.5px;color:#bccad8;font-weight:400;letter-spacing:0px;-webkit-text-stroke:0.25px #bccad8;">dB</div>
<div class="t" style="left:359.10px;top:714.27px;width:400px;text-align:center;line-height:16.25px;font-size:12.5px;color:#bccad8;font-weight:400;letter-spacing:0px;-webkit-text-stroke:0.25px #bccad8;">0.4</div>
<div class="t" style="left:430.50px;top:714.27px;width:400px;text-align:center;line-height:16.25px;font-size:12.5px;color:#bccad8;font-weight:400;letter-spacing:0px;-webkit-text-stroke:0.25px #bccad8;">0.6</div>
<div class="t" style="left:332.70px;top:765.27px;width:400px;text-align:center;line-height:16.25px;font-size:12.5px;color:#bccad8;font-weight:400;letter-spacing:0px;-webkit-text-stroke:0.25px #bccad8;">0.2</div>
<div class="t" style="left:457.90px;top:765.27px;width:400px;text-align:center;line-height:16.25px;font-size:12.5px;color:#bccad8;font-weight:400;letter-spacing:0px;-webkit-text-stroke:0.25px #bccad8;">0.8</div>
<div class="t" style="left:365.00px;top:816.58px;width:400px;text-align:center;line-height:16.25px;font-size:12.5px;color:#bccad8;font-weight:400;letter-spacing:0px;-webkit-text-stroke:0.25px #bccad8;">0</div>
<div class="t" style="left:430.30px;top:816.58px;width:400px;text-align:center;line-height:16.25px;font-size:12.5px;color:#bccad8;font-weight:400;letter-spacing:0px;-webkit-text-stroke:0.25px #bccad8;">1.0</div>
<div class="t" style="left:547.00px;top:816.58px;width:400px;text-align:center;line-height:16.25px;font-size:12.5px;color:#bccad8;font-weight:400;letter-spacing:0px;-webkit-text-stroke:0.25px #bccad8;">0</div>
<div class="t" style="left:526.90px;top:794.88px;width:400px;text-align:center;line-height:16.25px;font-size:12.5px;color:#bccad8;font-weight:400;letter-spacing:0px;-webkit-text-stroke:0.25px #bccad8;">5</div>
<div class="t" style="left:517.00px;top:765.27px;width:400px;text-align:center;line-height:16.25px;font-size:12.5px;color:#bccad8;font-weight:400;letter-spacing:0px;-webkit-text-stroke:0.25px #bccad8;">10</div>
<div class="t" style="left:524.80px;top:735.77px;width:400px;text-align:center;line-height:16.25px;font-size:12.5px;color:#bccad8;font-weight:400;letter-spacing:0px;-webkit-text-stroke:0.25px #bccad8;">15</div>
<div class="t" style="left:542.80px;top:714.27px;width:400px;text-align:center;line-height:16.25px;font-size:12.5px;color:#bccad8;font-weight:400;letter-spacing:0px;-webkit-text-stroke:0.25px #bccad8;">20</div>
<div class="t" style="left:577.00px;top:706.17px;width:400px;text-align:center;line-height:16.25px;font-size:12.5px;color:#bccad8;font-weight:400;letter-spacing:0px;-webkit-text-stroke:0.25px #bccad8;">50</div>
<div class="t" style="left:611.40px;top:714.27px;width:400px;text-align:center;line-height:16.25px;font-size:12.5px;color:#bccad8;font-weight:400;letter-spacing:0px;-webkit-text-stroke:0.25px #bccad8;">80</div>
<div class="t" style="left:637.80px;top:743.17px;width:400px;text-align:center;line-height:16.25px;font-size:12.5px;color:#bccad8;font-weight:400;letter-spacing:0px;-webkit-text-stroke:0.25px #bccad8;">120</div>
<div class="t" style="left:638.40px;top:783.27px;width:400px;text-align:center;line-height:16.25px;font-size:12.5px;color:#bccad8;font-weight:400;letter-spacing:0px;-webkit-text-stroke:0.25px #bccad8;">160</div>
<div class="t" style="left:614.50px;top:816.58px;width:400px;text-align:center;line-height:16.25px;font-size:12.5px;color:#bccad8;font-weight:400;letter-spacing:0px;-webkit-text-stroke:0.25px #bccad8;">200</div>
<div class="t" style="left:576.50px;top:822.27px;width:400px;text-align:center;line-height:16.25px;font-size:12.5px;color:#bccad8;font-weight:400;letter-spacing:0px;-webkit-text-stroke:0.25px #bccad8;">ms</div>
<div class="t" style="left:731.00px;top:708.48px;width:400px;text-align:center;line-height:16.25px;font-size:12.5px;color:#bccad8;font-weight:400;letter-spacing:0px;-webkit-text-stroke:0.25px #bccad8;">100</div>
<div class="t" style="left:780.00px;top:707.48px;width:400px;text-align:center;line-height:16.25px;font-size:12.5px;color:#bccad8;font-weight:400;letter-spacing:0px;-webkit-text-stroke:0.25px #bccad8;">200</div>
<div class="t" style="left:711.00px;top:726.88px;width:400px;text-align:center;line-height:16.25px;font-size:12.5px;color:#bccad8;font-weight:400;letter-spacing:0px;-webkit-text-stroke:0.25px #bccad8;">50</div>
<div class="t" style="left:810.40px;top:726.88px;width:400px;text-align:center;line-height:16.25px;font-size:12.5px;color:#bccad8;font-weight:400;letter-spacing:0px;-webkit-text-stroke:0.25px #bccad8;">500</div>
<div class="t" style="left:817.60px;top:756.27px;width:400px;text-align:center;line-height:16.25px;font-size:12.5px;color:#bccad8;font-weight:400;letter-spacing:0px;-webkit-text-stroke:0.25px #bccad8;">1k</div>
<div class="t" style="left:697.00px;top:764.88px;width:400px;text-align:center;line-height:16.25px;font-size:12.5px;color:#bccad8;font-weight:400;letter-spacing:0px;-webkit-text-stroke:0.25px #bccad8;">20</div>
<div class="t" style="left:816.00px;top:784.27px;width:400px;text-align:center;line-height:16.25px;font-size:12.5px;color:#bccad8;font-weight:400;letter-spacing:0px;-webkit-text-stroke:0.25px #bccad8;">2k</div>
<div class="t" style="left:705.00px;top:793.48px;width:400px;text-align:center;line-height:16.25px;font-size:12.5px;color:#bccad8;font-weight:400;letter-spacing:0px;-webkit-text-stroke:0.25px #bccad8;">10</div>
<div class="t" style="left:728.40px;top:816.27px;width:400px;text-align:center;line-height:16.25px;font-size:12.5px;color:#bccad8;font-weight:400;letter-spacing:0px;-webkit-text-stroke:0.25px #bccad8;">5</div>
<div class="t" style="left:757.60px;top:822.27px;width:400px;text-align:center;line-height:16.25px;font-size:12.5px;color:#bccad8;font-weight:400;letter-spacing:0px;-webkit-text-stroke:0.25px #bccad8;">ms</div>
<div class="t" style="left:791.40px;top:815.88px;width:400px;text-align:center;line-height:16.25px;font-size:12.5px;color:#bccad8;font-weight:400;letter-spacing:0px;-webkit-text-stroke:0.25px #bccad8;">5k</div>
<div class="t" style="left:1031.50px;top:324.77px;width:400px;text-align:center;line-height:16.25px;font-size:12.5px;color:#bccad8;font-weight:400;letter-spacing:0px;-webkit-text-stroke:0.25px #bccad8;">-6</div>
<div class="t" style="left:1096.50px;top:324.77px;width:400px;text-align:center;line-height:16.25px;font-size:12.5px;color:#bccad8;font-weight:400;letter-spacing:0px;-webkit-text-stroke:0.25px #bccad8;">-4</div>
<div class="t" style="left:1003.20px;top:375.38px;width:400px;text-align:center;line-height:16.25px;font-size:12.5px;color:#bccad8;font-weight:400;letter-spacing:0px;-webkit-text-stroke:0.25px #bccad8;">-8</div>
<div class="t" style="left:1125.10px;top:375.38px;width:400px;text-align:center;line-height:16.25px;font-size:12.5px;color:#bccad8;font-weight:400;letter-spacing:0px;-webkit-text-stroke:0.25px #bccad8;">-2</div>
<div class="t" style="left:1027.80px;top:425.88px;width:400px;text-align:center;line-height:16.25px;font-size:12.5px;color:#bccad8;font-weight:400;letter-spacing:0px;-webkit-text-stroke:0.25px #bccad8;">-10</div>
<div class="t" style="left:1093.70px;top:425.88px;width:400px;text-align:center;line-height:16.25px;font-size:12.5px;color:#bccad8;font-weight:400;letter-spacing:0px;-webkit-text-stroke:0.25px #bccad8;">0</div>
<div class="t" style="left:1063.90px;top:433.07px;width:400px;text-align:center;line-height:16.25px;font-size:12.5px;color:#bccad8;font-weight:400;letter-spacing:0px;-webkit-text-stroke:0.25px #bccad8;">dB</div>
<div class="t" style="left:1007.30px;top:565.17px;width:400px;text-align:center;line-height:16.25px;font-size:12.5px;color:#bccad8;font-weight:400;letter-spacing:0px;-webkit-text-stroke:0.25px #bccad8;">Off</div>
<div class="t" style="left:1043.30px;top:535.88px;width:400px;text-align:center;line-height:16.25px;font-size:12.5px;color:#bccad8;font-weight:400;letter-spacing:0px;-webkit-text-stroke:0.25px #bccad8;">Soft</div>
<div class="t" style="left:1088.20px;top:536.27px;width:400px;text-align:center;line-height:16.25px;font-size:12.5px;color:#bccad8;font-weight:400;letter-spacing:0px;-webkit-text-stroke:0.25px #bccad8;">Hard</div>
<div class="t" style="left:1121.80px;top:564.77px;width:400px;text-align:center;line-height:16.25px;font-size:12.5px;color:#bccad8;font-weight:400;letter-spacing:0px;-webkit-text-stroke:0.25px #bccad8;">Clip</div>
<div class="t" style="left:1062.80px;top:706.17px;width:400px;text-align:center;line-height:16.25px;font-size:12.5px;color:#bccad8;font-weight:400;letter-spacing:0px;-webkit-text-stroke:0.25px #bccad8;">1:1</div>
<div class="t" style="left:1022.20px;top:815.58px;width:400px;text-align:center;line-height:16.25px;font-size:12.5px;color:#bccad8;font-weight:400;letter-spacing:0px;-webkit-text-stroke:0.25px #bccad8;">Input</div>
<div class="t" style="left:1110.90px;top:816.58px;width:400px;text-align:center;line-height:16.25px;font-size:12.5px;color:#bccad8;font-weight:400;letter-spacing:0px;-webkit-text-stroke:0.25px #bccad8;">Output</div>
<div class="t" style="left:1194.30px;top:706.67px;width:400px;text-align:center;line-height:16.25px;font-size:12.5px;color:#bccad8;font-weight:400;letter-spacing:0px;-webkit-text-stroke:0.25px #bccad8;">0</div>
<div class="t" style="left:1156.30px;top:816.38px;width:400px;text-align:center;line-height:16.25px;font-size:12.5px;color:#bccad8;font-weight:400;letter-spacing:0px;-webkit-text-stroke:0.25px #bccad8;">-30</div>
<div class="t" style="left:1228.00px;top:816.38px;width:400px;text-align:center;line-height:16.25px;font-size:12.5px;color:#bccad8;font-weight:400;letter-spacing:0px;-webkit-text-stroke:0.25px #bccad8;">30</div>
<div class="t" style="left:1194.30px;top:823.98px;width:400px;text-align:center;line-height:16.25px;font-size:12.5px;color:#bccad8;font-weight:400;letter-spacing:0px;-webkit-text-stroke:0.25px #bccad8;">dB</div>
<svg style="position:absolute;left:0;top:0" width="1800" height="900"><line x1="573.00" y1="637.30" x2="568.75" y2="644.66" stroke="#b3c3d4" stroke-width="2.6" stroke-linecap="butt"/><line x1="554.70" y1="619.00" x2="547.34" y2="623.25" stroke="#b3c3d4" stroke-width="2.6" stroke-linecap="butt"/><line x1="548.00" y1="594.00" x2="539.50" y2="594.00" stroke="#b3c3d4" stroke-width="2.6" stroke-linecap="butt"/><line x1="554.70" y1="569.00" x2="547.34" y2="564.75" stroke="#b3c3d4" stroke-width="2.6" stroke-linecap="butt"/><line x1="573.00" y1="550.70" x2="568.75" y2="543.34" stroke="#b3c3d4" stroke-width="2.6" stroke-linecap="butt"/><line x1="598.00" y1="544.00" x2="598.00" y2="535.50" stroke="#b3c3d4" stroke-width="2.6" stroke-linecap="butt"/><line x1="623.00" y1="550.70" x2="627.25" y2="543.34" stroke="#b3c3d4" stroke-width="2.6" stroke-linecap="butt"/><line x1="641.30" y1="569.00" x2="648.66" y2="564.75" stroke="#b3c3d4" stroke-width="2.6" stroke-linecap="butt"/><line x1="648.00" y1="594.00" x2="656.50" y2="594.00" stroke="#b3c3d4" stroke-width="2.6" stroke-linecap="butt"/><line x1="641.30" y1="619.00" x2="648.66" y2="623.25" stroke="#b3c3d4" stroke-width="2.6" stroke-linecap="butt"/><line x1="623.00" y1="637.30" x2="627.25" y2="644.66" stroke="#b3c3d4" stroke-width="2.6" stroke-linecap="butt"/><line x1="753.60" y1="637.30" x2="749.35" y2="644.66" stroke="#b3c3d4" stroke-width="2.6" stroke-linecap="butt"/><line x1="735.74" y1="619.75" x2="728.46" y2="624.13" stroke="#b3c3d4" stroke-width="2.6" stroke-linecap="butt"/><line x1="728.60" y1="594.00" x2="720.10" y2="594.00" stroke="#b3c3d4" stroke-width="2.6" stroke-linecap="butt"/><line x1="739.20" y1="563.22" x2="732.50" y2="557.98" stroke="#b3c3d4" stroke-width="2.6" stroke-linecap="butt"/><line x1="770.35" y1="544.69" x2="768.94" y2="536.30" stroke="#b3c3d4" stroke-width="2.6" stroke-linecap="butt"/><line x1="806.20" y1="552.31" x2="810.89" y2="545.22" stroke="#b3c3d4" stroke-width="2.6" stroke-linecap="butt"/><line x1="826.15" y1="578.55" x2="834.24" y2="575.92" stroke="#b3c3d4" stroke-width="2.6" stroke-linecap="butt"/><line x1="823.54" y1="615.92" x2="831.18" y2="619.64" stroke="#b3c3d4" stroke-width="2.6" stroke-linecap="butt"/><line x1="802.84" y1="637.73" x2="806.96" y2="645.17" stroke="#b3c3d4" stroke-width="2.6" stroke-linecap="butt"/><line x1="932.60" y1="637.30" x2="928.35" y2="644.66" stroke="#b3c3d4" stroke-width="2.6" stroke-linecap="butt"/><line x1="915.54" y1="621.03" x2="908.39" y2="625.63" stroke="#b3c3d4" stroke-width="2.6" stroke-linecap="butt"/><line x1="907.83" y1="598.75" x2="899.36" y2="599.56" stroke="#b3c3d4" stroke-width="2.6" stroke-linecap="butt"/><line x1="911.18" y1="575.42" x2="903.29" y2="572.26" stroke="#b3c3d4" stroke-width="2.6" stroke-linecap="butt"/><line x1="924.86" y1="556.21" x2="919.29" y2="549.79" stroke="#b3c3d4" stroke-width="2.6" stroke-linecap="butt"/><line x1="945.81" y1="545.41" x2="943.81" y2="537.15" stroke="#b3c3d4" stroke-width="2.6" stroke-linecap="butt"/><line x1="969.39" y1="545.41" x2="971.39" y2="537.15" stroke="#b3c3d4" stroke-width="2.6" stroke-linecap="butt"/><line x1="990.34" y1="556.21" x2="995.91" y2="549.79" stroke="#b3c3d4" stroke-width="2.6" stroke-linecap="butt"/><line x1="1004.02" y1="575.42" x2="1011.91" y2="572.26" stroke="#b3c3d4" stroke-width="2.6" stroke-linecap="butt"/><line x1="1007.37" y1="598.75" x2="1015.84" y2="599.56" stroke="#b3c3d4" stroke-width="2.6" stroke-linecap="butt"/><line x1="999.66" y1="621.03" x2="1006.81" y2="625.63" stroke="#b3c3d4" stroke-width="2.6" stroke-linecap="butt"/><line x1="982.60" y1="637.30" x2="986.85" y2="644.66" stroke="#b3c3d4" stroke-width="2.6" stroke-linecap="butt"/><line x1="376.20" y1="805.91" x2="373.20" y2="811.11" stroke="#b3c3d4" stroke-width="2.3" stroke-linecap="butt"/><line x1="357.78" y1="779.60" x2="351.87" y2="780.64" stroke="#b3c3d4" stroke-width="2.3" stroke-linecap="butt"/><line x1="366.09" y1="748.57" x2="361.49" y2="744.72" stroke="#b3c3d4" stroke-width="2.3" stroke-linecap="butt"/><line x1="395.20" y1="735.00" x2="395.20" y2="729.00" stroke="#b3c3d4" stroke-width="2.3" stroke-linecap="butt"/><line x1="424.31" y1="748.57" x2="428.91" y2="744.72" stroke="#b3c3d4" stroke-width="2.3" stroke-linecap="butt"/><line x1="432.62" y1="779.60" x2="438.53" y2="780.64" stroke="#b3c3d4" stroke-width="2.3" stroke-linecap="butt"/><line x1="414.20" y1="805.91" x2="417.20" y2="811.11" stroke="#b3c3d4" stroke-width="2.3" stroke-linecap="butt"/><line x1="576.20" y1="806.61" x2="573.20" y2="811.81" stroke="#b3c3d4" stroke-width="2.3" stroke-linecap="butt"/><line x1="562.29" y1="792.70" x2="557.09" y2="795.70" stroke="#b3c3d4" stroke-width="2.3" stroke-linecap="butt"/><line x1="557.20" y1="773.70" x2="551.20" y2="773.70" stroke="#b3c3d4" stroke-width="2.3" stroke-linecap="butt"/><line x1="562.29" y1="754.70" x2="557.09" y2="751.70" stroke="#b3c3d4" stroke-width="2.3" stroke-linecap="butt"/><line x1="576.20" y1="740.79" x2="573.20" y2="735.59" stroke="#b3c3d4" stroke-width="2.3" stroke-linecap="butt"/><line x1="595.20" y1="735.70" x2="595.20" y2="729.70" stroke="#b3c3d4" stroke-width="2.3" stroke-linecap="butt"/><line x1="614.20" y1="740.79" x2="617.20" y2="735.59" stroke="#b3c3d4" stroke-width="2.3" stroke-linecap="butt"/><line x1="628.11" y1="754.70" x2="633.31" y2="751.70" stroke="#b3c3d4" stroke-width="2.3" stroke-linecap="butt"/><line x1="633.20" y1="773.70" x2="639.20" y2="773.70" stroke="#b3c3d4" stroke-width="2.3" stroke-linecap="butt"/><line x1="628.11" y1="792.70" x2="633.31" y2="795.70" stroke="#b3c3d4" stroke-width="2.3" stroke-linecap="butt"/><line x1="614.20" y1="806.61" x2="617.20" y2="811.81" stroke="#b3c3d4" stroke-width="2.3" stroke-linecap="butt"/><line x1="758.60" y1="806.41" x2="755.60" y2="811.61" stroke="#b3c3d4" stroke-width="2.3" stroke-linecap="butt"/><line x1="744.69" y1="792.50" x2="739.49" y2="795.50" stroke="#b3c3d4" stroke-width="2.3" stroke-linecap="butt"/><line x1="739.60" y1="773.50" x2="733.60" y2="773.50" stroke="#b3c3d4" stroke-width="2.3" stroke-linecap="butt"/><line x1="744.69" y1="754.50" x2="739.49" y2="751.50" stroke="#b3c3d4" stroke-width="2.3" stroke-linecap="butt"/><line x1="758.60" y1="740.59" x2="755.60" y2="735.39" stroke="#b3c3d4" stroke-width="2.3" stroke-linecap="butt"/><line x1="777.60" y1="735.50" x2="777.60" y2="729.50" stroke="#b3c3d4" stroke-width="2.3" stroke-linecap="butt"/><line x1="796.60" y1="740.59" x2="799.60" y2="735.39" stroke="#b3c3d4" stroke-width="2.3" stroke-linecap="butt"/><line x1="813.08" y1="759.88" x2="818.68" y2="757.73" stroke="#b3c3d4" stroke-width="2.3" stroke-linecap="butt"/><line x1="813.74" y1="785.24" x2="819.45" y2="787.10" stroke="#b3c3d4" stroke-width="2.3" stroke-linecap="butt"/><line x1="796.60" y1="806.41" x2="799.60" y2="811.61" stroke="#b3c3d4" stroke-width="2.3" stroke-linecap="butt"/><line x1="939.40" y1="806.91" x2="936.40" y2="812.11" stroke="#b3c3d4" stroke-width="2.3" stroke-linecap="butt"/><line x1="925.49" y1="793.00" x2="920.29" y2="796.00" stroke="#b3c3d4" stroke-width="2.3" stroke-linecap="butt"/><line x1="920.40" y1="774.00" x2="914.40" y2="774.00" stroke="#b3c3d4" stroke-width="2.3" stroke-linecap="butt"/><line x1="929.72" y1="749.07" x2="925.19" y2="745.13" stroke="#b3c3d4" stroke-width="2.3" stroke-linecap="butt"/><line x1="946.03" y1="738.07" x2="944.08" y2="732.40" stroke="#b3c3d4" stroke-width="2.3" stroke-linecap="butt"/><line x1="966.30" y1="736.83" x2="967.55" y2="730.96" stroke="#b3c3d4" stroke-width="2.3" stroke-linecap="butt"/><line x1="987.08" y1="749.07" x2="991.61" y2="745.13" stroke="#b3c3d4" stroke-width="2.3" stroke-linecap="butt"/><line x1="996.03" y1="768.71" x2="1001.97" y2="767.88" stroke="#b3c3d4" stroke-width="2.3" stroke-linecap="butt"/><line x1="994.11" y1="787.00" x2="999.75" y2="789.05" stroke="#b3c3d4" stroke-width="2.3" stroke-linecap="butt"/><line x1="977.40" y1="806.91" x2="980.40" y2="812.11" stroke="#b3c3d4" stroke-width="2.3" stroke-linecap="butt"/><line x1="1245.20" y1="416.71" x2="1242.20" y2="421.91" stroke="#b3c3d4" stroke-width="2.3" stroke-linecap="butt"/><line x1="1231.29" y1="402.80" x2="1226.09" y2="405.80" stroke="#b3c3d4" stroke-width="2.3" stroke-linecap="butt"/><line x1="1226.20" y1="383.80" x2="1220.20" y2="383.80" stroke="#b3c3d4" stroke-width="2.3" stroke-linecap="butt"/><line x1="1231.29" y1="364.80" x2="1226.09" y2="361.80" stroke="#b3c3d4" stroke-width="2.3" stroke-linecap="butt"/><line x1="1245.20" y1="350.89" x2="1242.20" y2="345.69" stroke="#b3c3d4" stroke-width="2.3" stroke-linecap="butt"/><line x1="1264.20" y1="345.80" x2="1264.20" y2="339.80" stroke="#b3c3d4" stroke-width="2.3" stroke-linecap="butt"/><line x1="1283.20" y1="350.89" x2="1286.20" y2="345.69" stroke="#b3c3d4" stroke-width="2.3" stroke-linecap="butt"/><line x1="1297.11" y1="364.80" x2="1302.31" y2="361.80" stroke="#b3c3d4" stroke-width="2.3" stroke-linecap="butt"/><line x1="1302.20" y1="383.80" x2="1308.20" y2="383.80" stroke="#b3c3d4" stroke-width="2.3" stroke-linecap="butt"/><line x1="1297.11" y1="402.80" x2="1302.31" y2="405.80" stroke="#b3c3d4" stroke-width="2.3" stroke-linecap="butt"/><line x1="1283.20" y1="416.71" x2="1286.20" y2="421.91" stroke="#b3c3d4" stroke-width="2.3" stroke-linecap="butt"/><line x1="1231.09" y1="583.80" x2="1225.89" y2="580.80" stroke="#b3c3d4" stroke-width="2.3" stroke-linecap="butt"/><line x1="1251.00" y1="567.09" x2="1248.95" y2="561.45" stroke="#b3c3d4" stroke-width="2.3" stroke-linecap="butt"/><line x1="1277.00" y1="567.09" x2="1279.05" y2="561.45" stroke="#b3c3d4" stroke-width="2.3" stroke-linecap="butt"/><line x1="1296.91" y1="583.80" x2="1302.11" y2="580.80" stroke="#b3c3d4" stroke-width="2.3" stroke-linecap="butt"/><line x1="1244.80" y1="806.61" x2="1241.80" y2="811.81" stroke="#b3c3d4" stroke-width="2.3" stroke-linecap="butt"/><line x1="1230.89" y1="792.70" x2="1225.69" y2="795.70" stroke="#b3c3d4" stroke-width="2.3" stroke-linecap="butt"/><line x1="1225.80" y1="773.70" x2="1219.80" y2="773.70" stroke="#b3c3d4" stroke-width="2.3" stroke-linecap="butt"/><line x1="1230.89" y1="754.70" x2="1225.69" y2="751.70" stroke="#b3c3d4" stroke-width="2.3" stroke-linecap="butt"/><line x1="1244.80" y1="740.79" x2="1241.80" y2="735.59" stroke="#b3c3d4" stroke-width="2.3" stroke-linecap="butt"/><line x1="1263.80" y1="735.70" x2="1263.80" y2="729.70" stroke="#b3c3d4" stroke-width="2.3" stroke-linecap="butt"/><line x1="1282.80" y1="740.79" x2="1285.80" y2="735.59" stroke="#b3c3d4" stroke-width="2.3" stroke-linecap="butt"/><line x1="1296.71" y1="754.70" x2="1301.91" y2="751.70" stroke="#b3c3d4" stroke-width="2.3" stroke-linecap="butt"/><line x1="1301.80" y1="773.70" x2="1307.80" y2="773.70" stroke="#b3c3d4" stroke-width="2.3" stroke-linecap="butt"/><line x1="1296.71" y1="792.70" x2="1301.91" y2="795.70" stroke="#b3c3d4" stroke-width="2.3" stroke-linecap="butt"/><line x1="1282.80" y1="806.61" x2="1285.80" y2="811.81" stroke="#b3c3d4" stroke-width="2.3" stroke-linecap="butt"/><line x1="1375.20" y1="806.61" x2="1372.20" y2="811.81" stroke="#b3c3d4" stroke-width="2.3" stroke-linecap="butt"/><line x1="1356.78" y1="780.30" x2="1350.87" y2="781.34" stroke="#b3c3d4" stroke-width="2.3" stroke-linecap="butt"/><line x1="1365.09" y1="749.27" x2="1360.49" y2="745.42" stroke="#b3c3d4" stroke-width="2.3" stroke-linecap="butt"/><line x1="1394.20" y1="735.70" x2="1394.20" y2="729.70" stroke="#b3c3d4" stroke-width="2.3" stroke-linecap="butt"/><line x1="1423.31" y1="749.27" x2="1427.91" y2="745.42" stroke="#b3c3d4" stroke-width="2.3" stroke-linecap="butt"/><line x1="1431.62" y1="780.30" x2="1437.53" y2="781.34" stroke="#b3c3d4" stroke-width="2.3" stroke-linecap="butt"/><line x1="1413.20" y1="806.61" x2="1416.20" y2="811.81" stroke="#b3c3d4" stroke-width="2.3" stroke-linecap="butt"/></svg>
<div class="knob" style="left:550.70px;top:546.40px;width:94.00px;height:94.00px;background:linear-gradient(192deg,#f0f0f0 0%,#d2d2d2 26%,#8a8a8a 50%,#383838 70%,#1a1a1a 100%);box-shadow:0 2.4px 4.2px rgba(0,0,0,0.75),0 0 1px rgba(0,0,0,0.8);"></div><div class="knob" style="left:552.91px;top:550.30px;width:87.89px;height:87.89px;background:radial-gradient(circle at 50% 50%,rgba(0,0,0,0.05) 0%,rgba(0,0,0,0) 30%,rgba(0,0,0,0.10) 100%),conic-gradient(from 0deg,#d0ccc8 0deg,#b0aca8 22deg,#96928e 55deg,#8a8682 90deg,#9a9692 125deg,#bdb9b5 160deg,#d4d0cc 180deg,#b9b5b1 200deg,#98948f 238deg,#86827e 270deg,#94908c 305deg,#b4b0ac 340deg,#d0ccc8 360deg);box-shadow:0 0 0 0.6px rgba(0,0,0,0.25);"></div><div class="knob" style="left:731.60px;top:546.60px;width:94.00px;height:94.00px;background:linear-gradient(192deg,#f0f0f0 0%,#d2d2d2 26%,#8a8a8a 50%,#383838 70%,#1a1a1a 100%);box-shadow:0 2.4px 4.2px rgba(0,0,0,0.75),0 0 1px rgba(0,0,0,0.8);"></div><div class="knob" style="left:733.81px;top:550.50px;width:87.89px;height:87.89px;background:radial-gradient(circle at 50% 50%,rgba(0,0,0,0.05) 0%,rgba(0,0,0,0) 30%,rgba(0,0,0,0.10) 100%),conic-gradient(from 0deg,#d0ccc8 0deg,#b0aca8 22deg,#96928e 55deg,#8a8682 90deg,#9a9692 125deg,#bdb9b5 160deg,#d4d0cc 180deg,#b9b5b1 200deg,#98948f 238deg,#86827e 270deg,#94908c 305deg,#b4b0ac 340deg,#d0ccc8 360deg);box-shadow:0 0 0 0.6px rgba(0,0,0,0.25);"></div><div class="knob" style="left:910.40px;top:546.60px;width:94.00px;height:94.00px;background:linear-gradient(192deg,#f0f0f0 0%,#d2d2d2 26%,#8a8a8a 50%,#383838 70%,#1a1a1a 100%);box-shadow:0 2.4px 4.2px rgba(0,0,0,0.75),0 0 1px rgba(0,0,0,0.8);"></div><div class="knob" style="left:912.61px;top:550.50px;width:87.89px;height:87.89px;background:radial-gradient(circle at 50% 50%,rgba(0,0,0,0.05) 0%,rgba(0,0,0,0) 30%,rgba(0,0,0,0.10) 100%),conic-gradient(from 0deg,#d0ccc8 0deg,#b0aca8 22deg,#96928e 55deg,#8a8682 90deg,#9a9692 125deg,#bdb9b5 160deg,#d4d0cc 180deg,#b9b5b1 200deg,#98948f 238deg,#86827e 270deg,#94908c 305deg,#b4b0ac 340deg,#d0ccc8 360deg);box-shadow:0 0 0 0.6px rgba(0,0,0,0.25);"></div><div class="knob" style="left:360.70px;top:738.00px;width:69.00px;height:69.00px;background:linear-gradient(192deg,#f0f0f0 0%,#d2d2d2 26%,#8a8a8a 50%,#383838 70%,#1a1a1a 100%);box-shadow:0 1.7px 3.1px rgba(0,0,0,0.75),0 0 1px rgba(0,0,0,0.8);"></div><div class="knob" style="left:362.32px;top:740.86px;width:64.52px;height:64.52px;background:radial-gradient(circle at 50% 50%,rgba(0,0,0,0.05) 0%,rgba(0,0,0,0) 30%,rgba(0,0,0,0.10) 100%),conic-gradient(from 0deg,#d0ccc8 0deg,#b0aca8 22deg,#96928e 55deg,#8a8682 90deg,#9a9692 125deg,#bdb9b5 160deg,#d4d0cc 180deg,#b9b5b1 200deg,#98948f 238deg,#86827e 270deg,#94908c 305deg,#b4b0ac 340deg,#d0ccc8 360deg);box-shadow:0 0 0 0.6px rgba(0,0,0,0.25);"></div><div class="knob" style="left:560.70px;top:738.30px;width:69.00px;height:69.00px;background:linear-gradient(192deg,#f0f0f0 0%,#d2d2d2 26%,#8a8a8a 50%,#383838 70%,#1a1a1a 100%);box-shadow:0 1.7px 3.1px rgba(0,0,0,0.75),0 0 1px rgba(0,0,0,0.8);"></div><div class="knob" style="left:562.32px;top:741.16px;width:64.52px;height:64.52px;background:radial-gradient(circle at 50% 50%,rgba(0,0,0,0.05) 0%,rgba(0,0,0,0) 30%,rgba(0,0,0,0.10) 100%),conic-gradient(from 0deg,#d0ccc8 0deg,#b0aca8 22deg,#96928e 55deg,#8a8682 90deg,#9a9692 125deg,#bdb9b5 160deg,#d4d0cc 180deg,#b9b5b1 200deg,#98948f 238deg,#86827e 270deg,#94908c 305deg,#b4b0ac 340deg,#d0ccc8 360deg);box-shadow:0 0 0 0.6px rgba(0,0,0,0.25);"></div><div class="knob" style="left:743.00px;top:738.00px;width:69.00px;height:69.00px;background:linear-gradient(192deg,#f0f0f0 0%,#d2d2d2 26%,#8a8a8a 50%,#383838 70%,#1a1a1a 100%);box-shadow:0 1.7px 3.1px rgba(0,0,0,0.75),0 0 1px rgba(0,0,0,0.8);"></div><div class="knob" style="left:744.62px;top:740.86px;width:64.52px;height:64.52px;background:radial-gradient(circle at 50% 50%,rgba(0,0,0,0.05) 0%,rgba(0,0,0,0) 30%,rgba(0,0,0,0.10) 100%),conic-gradient(from 0deg,#d0ccc8 0deg,#b0aca8 22deg,#96928e 55deg,#8a8682 90deg,#9a9692 125deg,#bdb9b5 160deg,#d4d0cc 180deg,#b9b5b1 200deg,#98948f 238deg,#86827e 270deg,#94908c 305deg,#b4b0ac 340deg,#d0ccc8 360deg);box-shadow:0 0 0 0.6px rgba(0,0,0,0.25);"></div><div class="knob" style="left:923.90px;top:738.10px;width:69.00px;height:69.00px;background:linear-gradient(192deg,#f0f0f0 0%,#d2d2d2 26%,#8a8a8a 50%,#383838 70%,#1a1a1a 100%);box-shadow:0 1.7px 3.1px rgba(0,0,0,0.75),0 0 1px rgba(0,0,0,0.8);"></div><div class="knob" style="left:925.52px;top:740.96px;width:64.52px;height:64.52px;background:radial-gradient(circle at 50% 50%,rgba(0,0,0,0.05) 0%,rgba(0,0,0,0) 30%,rgba(0,0,0,0.10) 100%),conic-gradient(from 0deg,#d0ccc8 0deg,#b0aca8 22deg,#96928e 55deg,#8a8682 90deg,#9a9692 125deg,#bdb9b5 160deg,#d4d0cc 180deg,#b9b5b1 200deg,#98948f 238deg,#86827e 270deg,#94908c 305deg,#b4b0ac 340deg,#d0ccc8 360deg);box-shadow:0 0 0 0.6px rgba(0,0,0,0.25);"></div><div class="knob" style="left:1229.50px;top:348.10px;width:69.00px;height:69.00px;background:linear-gradient(192deg,#f0f0f0 0%,#d2d2d2 26%,#8a8a8a 50%,#383838 70%,#1a1a1a 100%);box-shadow:0 1.7px 3.1px rgba(0,0,0,0.75),0 0 1px rgba(0,0,0,0.8);"></div><div class="knob" style="left:1231.12px;top:350.96px;width:64.52px;height:64.52px;background:radial-gradient(circle at 50% 50%,rgba(0,0,0,0.05) 0%,rgba(0,0,0,0) 30%,rgba(0,0,0,0.10) 100%),conic-gradient(from 0deg,#d0ccc8 0deg,#b0aca8 22deg,#96928e 55deg,#8a8682 90deg,#9a9692 125deg,#bdb9b5 160deg,#d4d0cc 180deg,#b9b5b1 200deg,#98948f 238deg,#86827e 270deg,#94908c 305deg,#b4b0ac 340deg,#d0ccc8 360deg);box-shadow:0 0 0 0.6px rgba(0,0,0,0.25);"></div><div class="knob" style="left:1229.50px;top:567.50px;width:69.00px;height:69.00px;background:linear-gradient(192deg,#f0f0f0 0%,#d2d2d2 26%,#8a8a8a 50%,#383838 70%,#1a1a1a 100%);box-shadow:0 1.7px 3.1px rgba(0,0,0,0.75),0 0 1px rgba(0,0,0,0.8);"></div><div class="knob" style="left:1231.12px;top:570.36px;width:64.52px;height:64.52px;background:radial-gradient(circle at 50% 50%,rgba(0,0,0,0.05) 0%,rgba(0,0,0,0) 30%,rgba(0,0,0,0.10) 100%),conic-gradient(from 0deg,#d0ccc8 0deg,#b0aca8 22deg,#96928e 55deg,#8a8682 90deg,#9a9692 125deg,#bdb9b5 160deg,#d4d0cc 180deg,#b9b5b1 200deg,#98948f 238deg,#86827e 270deg,#94908c 305deg,#b4b0ac 340deg,#d0ccc8 360deg);box-shadow:0 0 0 0.6px rgba(0,0,0,0.25);"></div><div class="knob" style="left:1229.50px;top:738.20px;width:69.00px;height:69.00px;background:linear-gradient(192deg,#f0f0f0 0%,#d2d2d2 26%,#8a8a8a 50%,#383838 70%,#1a1a1a 100%);box-shadow:0 1.7px 3.1px rgba(0,0,0,0.75),0 0 1px rgba(0,0,0,0.8);"></div><div class="knob" style="left:1231.12px;top:741.06px;width:64.52px;height:64.52px;background:radial-gradient(circle at 50% 50%,rgba(0,0,0,0.05) 0%,rgba(0,0,0,0) 30%,rgba(0,0,0,0.10) 100%),conic-gradient(from 0deg,#d0ccc8 0deg,#b0aca8 22deg,#96928e 55deg,#8a8682 90deg,#9a9692 125deg,#bdb9b5 160deg,#d4d0cc 180deg,#b9b5b1 200deg,#98948f 238deg,#86827e 270deg,#94908c 305deg,#b4b0ac 340deg,#d0ccc8 360deg);box-shadow:0 0 0 0.6px rgba(0,0,0,0.25);"></div><div class="knob" style="left:1359.70px;top:738.30px;width:69.00px;height:69.00px;background:linear-gradient(192deg,#f0f0f0 0%,#d2d2d2 26%,#8a8a8a 50%,#383838 70%,#1a1a1a 100%);box-shadow:0 1.7px 3.1px rgba(0,0,0,0.75),0 0 1px rgba(0,0,0,0.8);"></div><div class="knob" style="left:1361.32px;top:741.16px;width:64.52px;height:64.52px;background:radial-gradient(circle at 50% 50%,rgba(0,0,0,0.05) 0%,rgba(0,0,0,0) 30%,rgba(0,0,0,0.10) 100%),conic-gradient(from 0deg,#d0ccc8 0deg,#b0aca8 22deg,#96928e 55deg,#8a8682 90deg,#9a9692 125deg,#bdb9b5 160deg,#d4d0cc 180deg,#b9b5b1 200deg,#98948f 238deg,#86827e 270deg,#94908c 305deg,#b4b0ac 340deg,#d0ccc8 360deg);box-shadow:0 0 0 0.6px rgba(0,0,0,0.25);"></div>
<svg style="position:absolute;left:0;top:0" width="1800" height="900"><line x1="579.15" y1="572.43" x2="569.21" y2="561.19" stroke="#1a1a1a" stroke-width="2.8" stroke-linecap="butt"/><line x1="750.66" y1="591.79" x2="735.19" y2="590.79" stroke="#1a1a1a" stroke-width="2.8" stroke-linecap="butt"/><line x1="945.82" y1="569.21" x2="938.96" y2="554.76" stroke="#1a1a1a" stroke-width="2.8" stroke-linecap="butt"/><line x1="395.20" y1="752.50" x2="395.20" y2="740.50" stroke="#1a1a1a" stroke-width="2.2" stroke-linecap="butt"/><line x1="613.04" y1="762.71" x2="622.18" y2="757.53" stroke="#1a1a1a" stroke-width="2.2" stroke-linecap="butt"/><line x1="797.91" y1="770.54" x2="808.85" y2="769.48" stroke="#1a1a1a" stroke-width="2.2" stroke-linecap="butt"/><line x1="944.08" y1="787.96" x2="936.58" y2="796.00" stroke="#1a1a1a" stroke-width="2.2" stroke-linecap="butt"/><line x1="1274.18" y1="400.97" x2="1279.42" y2="410.41" stroke="#1a1a1a" stroke-width="2.2" stroke-linecap="butt"/><line x1="1245.90" y1="592.38" x2="1237.07" y2="587.68" stroke="#1a1a1a" stroke-width="2.2" stroke-linecap="butt"/><line x1="1273.86" y1="791.24" x2="1278.79" y2="800.51" stroke="#1a1a1a" stroke-width="2.2" stroke-linecap="butt"/><line x1="1394.20" y1="752.80" x2="1394.20" y2="740.80" stroke="#1a1a1a" stroke-width="2.2" stroke-linecap="butt"/></svg>
</body></html>
